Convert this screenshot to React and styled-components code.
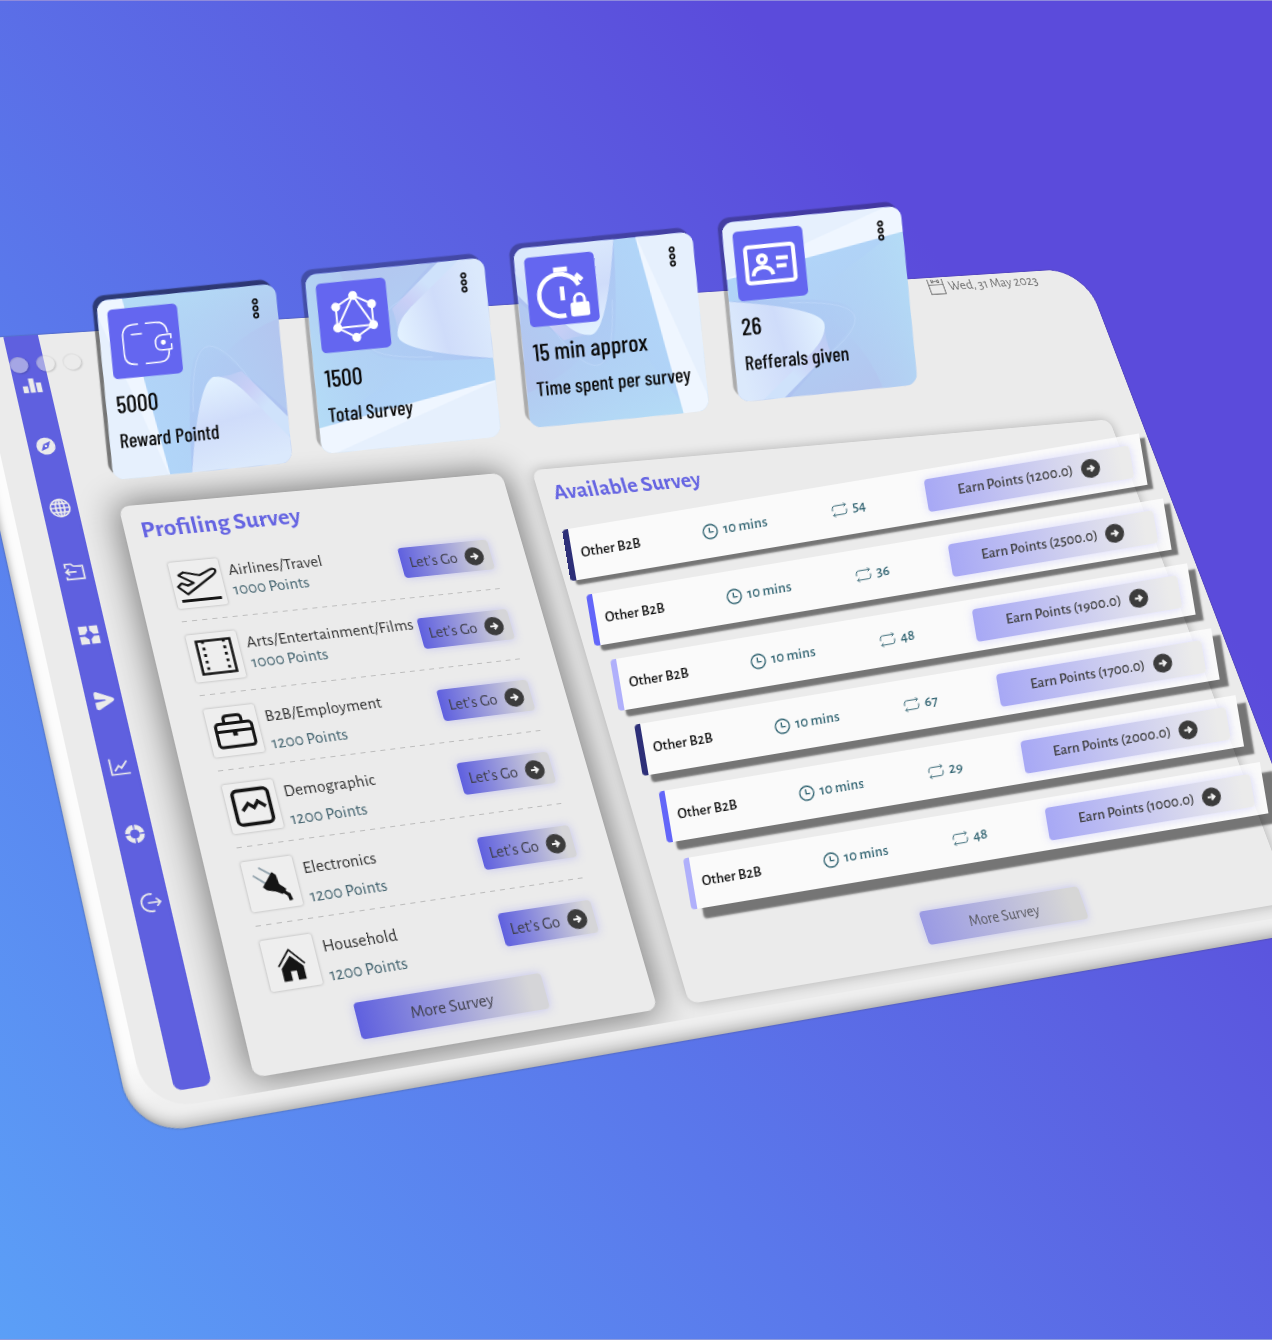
import React from "react";
import styled, { createGlobalStyle } from "styled-components";

const humanist = `"Alegreya Sans", Lato, "Open Sans", sans-serif`;
const condensed = `"Barlow Condensed", "Roboto Condensed", "Liberation Sans Narrow", Roboto, sans-serif`;

const GlobalStyle = createGlobalStyle`
  * { box-sizing: border-box; }
  body { margin: 0; font-family: ${humanist}; }
  button { font: inherit; cursor: pointer; }
  h2, p, ul, dl { margin: 0; padding: 0; }
  ul { list-style: none; }
`;

/* ---------- stage ---------- */

const Stage = styled.main`
  display: grid;
  grid-template: 1fr / 1fr;
  min-height: 100vh;
  overflow: hidden;
  background: linear-gradient(52deg, #5b9ff7 0%, #5a78eb 36%, #5b5fe1 59%, #5b4bdb 77%);
  border-top: 1px solid #8f8bdc;
  border-bottom: 1px solid #8f9bdc;
`;

const Layer = styled.div`
  grid-area: 1 / 1;
  align-self: start;
  justify-self: start;
  transform-origin: 0 0;
`;

/* ---------- tilted board ---------- */

const Board = styled(Layer)`
  display: flex;
  width: 1280px;
  height: 800px;
  padding: 0 2px 20px 16px;
  border-radius: 40px 50px 70px 48px;
  background: linear-gradient(0deg, #efefef 24px, #fcfcfc 70px);
  box-shadow:
    inset 3px 0 6px -2px rgba(0, 0, 0, 0.22),
    inset 0 -8px 12px -2px rgba(0, 0, 0, 0.22),
    0 0 2px rgba(60, 60, 60, 0.6);
  transform: matrix3d(
    1.02922, -0.01906, 0, 0.00013879,
    0.20331, 0.85463, 0, -0.00012458,
    0, 0, 1, 0,
    -42, 339, 0, 1
  );
`;

const Face = styled.div`
  position: relative;
  flex: 1;
  display: flex;
  gap: 39px;
  padding: 0 38px 14px 28px;
  overflow: hidden;
  border-radius: 30px 48px 50px 44px;
  background: #ebebeb;
`;

const WindowDots = styled.div`
  position: absolute;
  top: 23px;
  left: 28px;
  display: flex;
  gap: 8px;
`;

const WindowDot = styled.span`
  width: 18px;
  height: 18px;
  border-radius: 50%;
  background: rgba(235, 235, 235, 0.5);
  box-shadow: 1px 1px 2px rgba(0, 0, 0, 0.18), inset 1px 1px 1px rgba(0, 0, 0, 0.06);
`;

const Sidebar = styled.nav`
  display: flex;
  flex-direction: column;
  align-items: center;
  gap: 47px;
  width: 34px;
  padding-top: 45px;
  border-radius: 0 0 8px 8px;
  background: #5f60df;
`;

const NavLink = styled.a`
  display: block;
  width: 20px;
  height: 20px;
  color: #ebebeb;
`;

const Main = styled.div`
  flex: 1;
  display: flex;
  flex-direction: column;
`;

const TopBar = styled.header`
  flex: none;
  display: flex;
  justify-content: flex-end;
  align-items: center;
  gap: 4px;
  height: 24px;
  margin-bottom: 169px;
  padding-right: 25px;
  color: #6e6e6e;
  font-size: 17px;
`;

const Panels = styled.div`
  flex: 1;
  display: grid;
  grid-template-columns: 4fr 7fr;
  gap: 33px;
`;

const Panel = styled.section`
  display: flex;
  flex-direction: column;
  padding: 14px 0 18px;
  border-radius: 10px;
  background: #ebebeb;
  box-shadow: ${(p) =>
    p.$raised ? "0 0 34px 4px rgba(0, 0, 0, 0.48)" : "0 0 14px rgba(0, 0, 0, 0.26)"};
`;

const PanelTitle = styled.h2`
  padding-left: 16px;
  margin-bottom: 8px;
  color: #6564e2;
  font-size: 25px;
  font-weight: 700;
  line-height: 28px;
`;

const CategoryList = styled.ul`
  margin: 0 34px;
`;

const Category = styled.li`
  display: flex;
  align-items: center;
  height: 77px;
  background: repeating-linear-gradient(90deg, #bcbcbc 0 5px, transparent 5px 10px) 0 100% / 100% 1px no-repeat;
  &:last-child { background: none; }
`;

const Tile = styled.span`
  flex: none;
  width: 49px;
  height: 49px;
  padding: 3px;
  border-radius: 2px;
  background: #eeeeee;
  color: #151515;
  box-shadow: 0 0 3px rgba(0, 0, 0, 0.28);
`;

const CategoryText = styled.div`
  flex: 1;
  height: 48px;
  padding: 3px 0 0 8px;
  white-space: nowrap;
  font-size: 17px;
  line-height: ${(p) => (p.$tight ? "22px" : "36px")};
`;

const CategoryName = styled.p`
  color: #333;
  line-height: 20px;
`;

const CategoryPoints = styled.p`
  color: #43636f;
`;

const GradientButton = styled.button`
  display: flex;
  align-items: center;
  justify-content: center;
  border: 0;
  border-radius: 4px;
  color: #40404c;
  background: linear-gradient(90deg, #5f60df 0%, #d5d5d8 92%);
  box-shadow: 0 0 10px rgba(120, 120, 250, 0.35);
`;

const GoButton = styled(GradientButton)`
  flex: none;
  gap: 8px;
  width: 95px;
  height: 33px;
  margin-right: 2px;
  padding: 0;
  font-size: 17px;
  white-space: nowrap;
`;

const MoreButton = styled(GradientButton)`
  align-self: center;
  width: 185px;
  height: 35px;
  margin-top: auto;
  margin-left: ${(p) => (p.$faded ? "26px" : "0")};
  font-size: 17px;
  ${(p) => p.$faded && "background: linear-gradient(90deg, #9a9ae4 0%, #d6d6d6 92%); color: #5a5a62;"}
`;

/* ---------- stat cards ---------- */

const StatStrip = styled(Layer)`
  display: flex;
  gap: 30px;
  transform: translate(96px, 300px) rotate(-7.1deg);
`;

const StatCard = styled.article`
  position: relative;
  width: 180px;
  height: 180px;
  padding: 10px;
  border-radius: 12px;
  transform: rotate(1.5deg);
  transform-origin: 0 0;
  box-shadow: -4px -5px 1px rgba(0, 0, 0, ${(p) => (p.$strong ? 0.5 : 0.27)});
  color: #0a0a0a;
  font-family: ${condensed};
`;

const Artwork = styled.svg`
  position: absolute;
  inset: 0;
  width: 100%;
  height: 100%;
  border-radius: 12px;
`;

const CardBody = styled.div`
  position: relative;
`;

const CardTop = styled.div`
  display: flex;
  align-items: flex-start;
  justify-content: space-between;
`;

const StatIcon = styled.span`
  width: 70px;
  height: 70px;
  border-radius: 5px;
  background: #6466f0;
  color: #fff;
`;

const MenuButton = styled.button`
  display: block;
  margin: 2px 8px 0 0;
  padding: 0;
  border: 0;
  background: none;
  color: #0a0a0a;
`;

const StatValue = styled.p`
  margin-top: 10px;
  font-size: 24px;
  font-weight: 500;
  line-height: 30px;
  white-space: nowrap;
`;

const StatLabel = styled.p`
  margin-top: 8px;
  font-size: 20px;
  font-weight: 500;
  line-height: 26px;
  white-space: nowrap;
`;

/* ---------- floating survey rows ---------- */

const SurveyRows = styled(Layer).attrs({ as: "ul" })`
  display: grid;
  gap: 16px;
  transform: translate(562px, 529px) rotate(-9.5deg);
`;

const SurveyRow = styled.li`
  display: grid;
  grid-template-columns: 123px 131px 96px 1fr;
  align-items: center;
  width: 585px;
  height: 52px;
  margin-top: ${(p) => (p.$loose ? "2px" : "0")};
  margin-left: ${(p) => p.$step * 13}px;
  padding: 0 12px 0 9px;
  border-left: 6px solid ${(p) => p.$accent};
  border-radius: 4px 0 0 4px;
  background: rgba(252, 252, 252, 0.82);
  background-clip: padding-box;
  box-shadow: ${(p) => `${p.$depth}px ${p.$depth}px 2px rgba(0, 0, 0, 0.5)`};
  color: #2f6270;
  font-size: 15px;
`;

const SurveyName = styled.span`
  color: #0b0b0b;
  font-weight: 500;
`;

const Metric = styled.span`
  display: flex;
  align-items: center;
  gap: 5px;
  font-weight: 500;
`;

const EarnButton = styled(GradientButton)`
  gap: 8px;
  height: 33px;
  padding: 0;
  color: #3d3d3d;
  font-size: 15px;
  font-weight: 500;
  white-space: nowrap;
  background: linear-gradient(90deg, #a7a8f5 0%, #ebebeb 95%);
  box-shadow: 0 0 8px rgba(150, 150, 255, 0.35);
`;

/* ---------- icons ---------- */

const Svg = ({ size = "100%", box = 24, children, ...rest }) => (
  <svg
    width={size}
    height={size}
    viewBox={`0 0 ${box} ${box}`}
    fill="none"
    stroke="currentColor"
    strokeWidth="2"
    aria-hidden="true"
    display="block"
    {...rest}
  >
    {children}
  </svg>
);

const ArrowCircle = ({ size }) => (
  <Svg size={size} box={20} stroke="none">
    <circle cx="10" cy="10" r="10" fill="#3c3c3c" />
    <path d="M6 10h7M10 6.8 13.3 10 10 13.2" stroke="#f2f2f2" strokeWidth="2" />
  </Svg>
);

const ClockIcon = () => (
  <Svg size={16}>
    <circle cx="12" cy="12" r="10.5" />
    <path d="M11 6v7h6" />
  </Svg>
);

const RepeatIcon = () => (
  <Svg size={16} strokeWidth="1.4">
    <path d="M1.500 12.500V9a4 4 0 0 1 4-4H22M19 2l3 3-3 3M22.500 11.500V15a4 4 0 0 1-4 4H2M5 16l-3 3 3 3" />
  </Svg>
);

const CalendarIcon = () => (
  <Svg size={22} strokeWidth="1.3">
    <path d="M2 1v21h20V1M2 9h20M7 2v4h2V2M15 2v4h2V2M10 4h4" />
  </Svg>
);

const MenuDots = () => (
  <svg width="8" height="22" viewBox="0 0 8 22" fill="none" stroke="currentColor" strokeWidth="1.7" display="block" aria-hidden="true">
    <circle cx="4" cy="4" r="2.200" />
    <circle cx="4" cy="11" r="2.200" />
    <circle cx="4" cy="18" r="2.200" />
  </svg>
);

const navItems = [
  ["Dashboard", <g fill="currentColor" stroke="none"><path d="M1 13h6v9H1zM9 3h6v19H9zM17 9h6v13h-6z" /></g>],
  ["Explore", <path fill="currentColor" stroke="none" fillRule="evenodd" d="M12 1a11 11 0 1 1 0 22 11 11 0 0 1 0-22zM18 6l-8.500 3.500L6 18l8.500-3.500zM12 10.500a1.500 1.500 0 1 1 0 3 1.500 1.500 0 0 1 0-3z" />],
  ["World", <g><circle cx="12" cy="12" r="11" /><ellipse cx="12" cy="12" rx="5" ry="11" /><path d="M1 12h22M3 6.500h18M3 17.500h18M12 1v22" /></g>],
  ["Files", <path d="M2 8V3h7l3 3h10v16H2v-3M14 13H2M6 9l-4 4 4 4" />],
  ["Fullscreen", <path fill="currentColor" stroke="none" d="M1 1h10v6L9.500 8 9 9.500 7 11H1zM13.500 1H23v10h-6L15.500 9 13.500 7zM1 13.500h6L9 15.500 11 17v6H1zM17 13.500h6V23h-9.500v-6L15 15.500z" />],
  ["Send", <path fill="currentColor" stroke="none" d="M5 1.500 21.500 9.500q3.500 2.500 0 5L5 23q-3.500 1-3.500-2.500V14l12-1.500v-1L1.500 10V4Q1.500.5 5 1.500z" />],
  ["Trends", <path d="M2 2v19h21M6 17l5-6 3 3 7-8" />],
  ["Segments", <circle cx="12" cy="12" r="8" strokeWidth="5.500" strokeDasharray="10.800 1.766" transform="rotate(-85 12 12)" />],
  ["Log out", <path d="M15 2.500a10 10 0 1 0 0 19M9 12h14M18.500 7.500 23 12l-4.500 4.500" />],
];

const categories = [
  { name: "Airlines/Travel", points: "1000 Points", tight: true, icon: (
    <Svg box={38}>
      <path strokeLinejoin="round" d="M1.500 20.500l3.500-3 5 2.500 5.500-2L4 10 8.500 7.500l13.500 4L31 7.500c3.500-1.500 5.500-.5 5.500 1 0 1.500-1.500 3-4 4.500L8.500 28z" />
      <path d="M2 34h34.500" strokeWidth="2.500" />
    </Svg>) },
  { name: "Arts/Entertainment/Films", points: "1000 Points", tight: true, icon: (
    <Svg box={38}>
      <path d="M5 4h29v30H5z" strokeWidth="2.200" />
      <path d="M10.500 4v31M28.500 4v31" strokeWidth="2.500" strokeDasharray="2.500 3.500" />
    </Svg>) },
  { name: "B2B/Employment", points: "1200 Points", icon: (
    <Svg box={38} strokeWidth="2.600" strokeLinejoin="round">
      <rect x="4" y="12" width="31" height="21" rx="3" />
      <path d="M12 12V8q0-3 3-3h9q3 0 3 3v4M4 19h31" />
      <path d="M17.500 18.500h4v5h-4z" fill="currentColor" stroke="none" />
    </Svg>) },
  { name: "Demographic", points: "1200 Points", icon: (
    <Svg box={38} strokeWidth="3">
      <rect x="4" y="4" width="30" height="30" rx="4" />
      <path d="M10 22l5.500-6 4.500 4 4-5 6 5" />
    </Svg>) },
  { name: "Electronics", points: "1200 Points", icon: (
    <Svg box={38}>
      <path d="M11 4l10 8M5 10l10 9" stroke="#93a3ad" strokeWidth="1.600" />
      <path d="M21 9l3 3 1 8 5 5-4 4-5-3-7-2-3-3z" fill="currentColor" stroke="none" />
      <path d="M27 26q2 3 4 4l1 5" strokeWidth="3" />
    </Svg>) },
  { name: "Household", points: "1200 Points", icon: (
    <Svg box={38}>
      <path d="M8 21 19 8l11 13" strokeWidth="1.500" />
      <path d="M10 23 19 13l9.500 10v11H22v-8h-5v8h-7z" fill="currentColor" stroke="none" />
    </Svg>) },
];

const surveys = [
  { repeats: 54, points: "1200.0", accent: "#2d2f78", depth: 5 },
  { repeats: 36, points: "2500.0", accent: "#6366f9", depth: 6 },
  { repeats: 48, points: "1900.0", accent: "#b0b0fb", depth: 7 },
  { repeats: 67, points: "1700.0", accent: "#2d2f78", depth: 8 },
  { repeats: 29, points: "2000.0", accent: "#6366f9", depth: 9, loose: true },
  { repeats: 48, points: "1000.0", accent: "#b0b0fb", depth: 11, loose: true },
];

const stats = [
  { value: "5000", label: "Reward Pointd", turn: 0, icon: (
    <Svg box={70} strokeWidth="1.500" strokeLinecap="round">
      <path d="M29 17h-4q-12 0-12 12v17q0 11 11 11h1M37 17h10q10 0 11 11M34 57h14q10 0 10-11v-1M22 27h10" />
      <path d="M61 30h-8q-8 0-8 8t8 7h8M61 30v4M61 40v5" />
      <circle cx="53" cy="37.500" r="2.500" fill="currentColor" stroke="none" />
    </Svg>) },
  { value: "1500", label: "Total Survey", turn: -90, icon: (
    <Svg box={70}>
      <path d="M36 15 54 25v21L36 57 18 46V25zM36 15 54 46H18z" strokeWidth="2" />
      <g fill="currentColor" stroke="none">
        <circle cx="36" cy="15" r="4.500" /><circle cx="54" cy="25" r="4.500" /><circle cx="54" cy="46" r="4.500" />
        <circle cx="36" cy="57" r="4.500" /><circle cx="18" cy="46" r="4.500" /><circle cx="18" cy="25" r="4.500" />
      </g>
    </Svg>) },
  { value: "15 min approx", label: "Time spent per survey", turn: 180, icon: (
    <Svg box={70} strokeWidth="5">
      <path d="M28 15h14" />
      <path d="M52 32A21 21 0 1 0 37 61M35 32v14M48 28l6-6M50 21l6 6" strokeWidth="4.500" />
      <rect x="42" y="49" width="19" height="14" rx="2" fill="currentColor" stroke="none" />
      <path d="M46.500 50v-4a5 5 0 0 1 10 0v4" strokeWidth="3" />
    </Svg>) },
  { value: "26", label: "Refferals given", turn: 90, icon: (
    <Svg box={70} strokeWidth="4">
      <rect x="11" y="17" width="48" height="36" rx="3" />
      <circle cx="27" cy="30" r="4" />
      <path d="M17 46q1-8 10-8t10 8M41 30h12M41 38h10" />
    </Svg>) },
];

function Waves({ id, turn }) {
  return (
    <Artwork viewBox="0 0 180 180" aria-hidden="true">
      <defs>
        <linearGradient id={`${id}-sky`} x1="0.1" y1="0.6" x2="1" y2="0.3">
          <stop offset="0" stopColor="#b1d6f9" />
          <stop offset="0.5" stopColor="#b0d0f5" />
          <stop offset="1" stopColor="#b3c6ef" />
        </linearGradient>
        <linearGradient id={`${id}-hill`} x1="0.2" y1="0" x2="0.4" y2="1">
          <stop offset="0" stopColor="#e4f3ff" />
          <stop offset="0.5" stopColor="#cfdcfa" />
          <stop offset="1" stopColor="#dbe9fc" />
        </linearGradient>
        <linearGradient id={`${id}-band`} x1="0" y1="0" x2="1" y2="1">
          <stop offset="0" stopColor="#b4cbf3" />
          <stop offset="0.35" stopColor="#c9cff6" />
          <stop offset="0.6" stopColor="#cfe2fb" />
        </linearGradient>
        <linearGradient id={`${id}-top`} x1="0" y1="0" x2="0.3" y2="1">
          <stop offset="0" stopColor="#b4dcf6" />
          <stop offset="1" stopColor="#b0cdf3" stopOpacity="0" />
        </linearGradient>
        <linearGradient id={`${id}-shade`} x1="0" y1="0" x2="0.2" y2="1">
          <stop offset="0" stopColor="#a9c0f0" stopOpacity="0.1" />
          <stop offset="1" stopColor="#a9b9ef" stopOpacity="0.6" />
        </linearGradient>
      </defs>
      <g transform={`rotate(${turn} 90 90)`}>
        <rect width="180" height="180" fill={`url(#${id}-sky)`} />
        <path d="M20 0H180V35Q120 52 85 110Q60 60 20 0Z" fill={`url(#${id}-top)`} />
        <path d="M79 180Q82 90 92 66Q104 44 126 70L180 128V180Z" fill={`url(#${id}-shade)`} />
        <path d="M86 120Q90 55 108 56T152 104" fill="none" stroke="#c3dafa" strokeWidth="0.8" opacity="0.8" />
        <path d="M112 87Q124 88 138 84L180 134V158L134 98Z" fill={`url(#${id}-band)`} />
        <path d="M79 180Q94 87 111 87Q124 87 138 103L180 155V180Z" fill={`url(#${id}-hill)`} />
        <path d="M0 0H26L57 180H0Z" fill="#eff6ff" />
        <path d="M0 15L56 180H0Z" fill="#e3eefc" opacity="0.7" />
      </g>
    </Artwork>
  );
}

/* ---------- page ---------- */

export default function App() {
  return (
    <Stage>
      <GlobalStyle />
      <Board>
        <Face>
          <Sidebar aria-label="Sections">
            {navItems.map(([label, icon]) => (
              <NavLink key={label} href="#" aria-label={label}>
                <Svg>{icon}</Svg>
              </NavLink>
            ))}
          </Sidebar>
          <Main>
            <TopBar>
              <CalendarIcon />
              <time dateTime="2023-05-31">Wed, 31 May 2023</time>
            </TopBar>
            <Panels>
              <Panel $raised>
                <PanelTitle>Profiling Survey</PanelTitle>
                <CategoryList>
                  {categories.map((c) => (
                    <Category key={c.name}>
                      <Tile>{c.icon}</Tile>
                      <CategoryText $tight={c.tight}>
                        <CategoryName>{c.name}</CategoryName>
                        <CategoryPoints>{c.points}</CategoryPoints>
                      </CategoryText>
                      <GoButton type="button">
                        Let’s Go <ArrowCircle size={20} />
                      </GoButton>
                    </Category>
                  ))}
                </CategoryList>
                <MoreButton type="button">More Survey</MoreButton>
              </Panel>
              <Panel>
                <PanelTitle>Available Survey</PanelTitle>
                <MoreButton type="button" $faded>More Survey</MoreButton>
              </Panel>
            </Panels>
          </Main>
          <WindowDots>
            <WindowDot />
            <WindowDot />
            <WindowDot />
          </WindowDots>
        </Face>
      </Board>

      <SurveyRows>
        {surveys.map((s, i) => (
          <SurveyRow key={s.points} $step={i} $accent={s.accent} $depth={s.depth} $loose={s.loose}>
            <SurveyName>Other B2B</SurveyName>
            <Metric><ClockIcon />10 mins</Metric>
            <Metric><RepeatIcon />{s.repeats}</Metric>
            <EarnButton type="button">
              Earn Points ({s.points}) <ArrowCircle size={19} />
            </EarnButton>
          </SurveyRow>
        ))}
      </SurveyRows>

      <StatStrip>
        {stats.map((s, i) => (
          <StatCard key={s.label} $strong={i === 0}>
            <Waves id={`wave${i}`} turn={s.turn} />
            <CardBody>
              <CardTop>
                <StatIcon>{s.icon}</StatIcon>
                <MenuButton type="button" aria-label={`${s.label} options`}>
                  <MenuDots />
                </MenuButton>
              </CardTop>
              <StatValue>{s.value}</StatValue>
              <StatLabel>{s.label}</StatLabel>
            </CardBody>
          </StatCard>
        ))}
      </StatStrip>
    </Stage>
  );
}
